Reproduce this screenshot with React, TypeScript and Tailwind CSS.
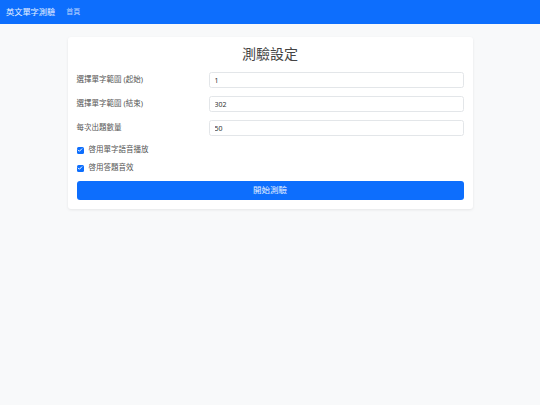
import { useState } from 'react';

const font = 'font-["Noto_Sans","Noto_Sans_CJK_TC",sans-serif]';

function Check({ label, checked, onChange }: { label: string; checked: boolean; onChange: () => void }) {
  return (
    <label className="flex h-[18px] items-center gap-[5px] cursor-pointer">
      <span
        onClick={onChange}
        className={
          checked
            ? 'grid h-[7px] w-[7px] place-items-center rounded-[1.5px] bg-[#0d6efd]'
            : 'grid h-[7px] w-[7px] place-items-center rounded-[1.5px] border border-[#adb5bd] bg-white'
        }
      >
        {checked && (
          <svg viewBox="0 0 8 8" className="h-[6px] w-[6px]">
            <path d="M1.6 4.1 3.2 5.7 6.4 2.4" fill="none" stroke="white" strokeWidth="1.3" strokeLinecap="round" strokeLinejoin="round" />
          </svg>
        )}
      </span>
      <span className="text-[7.5px] leading-none text-[#555]">{label}</span>
    </label>
  );
}

export default function App() {
  const [start, setStart] = useState('1');
  const [end, setEnd] = useState('302');
  const [count, setCount] = useState('50');
  const [speak, setSpeak] = useState(true);
  const [sfx, setSfx] = useState(true);

  const fields = [
    { label: '選擇單字範圍 (起始)', value: start, set: setStart },
    { label: '選擇單字範圍 (結束)', value: end, set: setEnd },
    { label: '每次出題數量', value: count, set: setCount },
  ];

  return (
    <div className={`${font} min-h-[405px] bg-[#f8f9fa]`}>
      <nav className="flex h-[24px] items-center gap-[11px] bg-[#0d6efd] px-[6px]">
        <span className="text-[8.2px] text-white/90">英文單字測驗</span>
        <span className="text-[7px] text-white/70">首頁</span>
      </nav>

      <div className="flex justify-center pt-[13px]">
        <div className="flex w-[405px] flex-col rounded-[3px] bg-white px-[9px] pt-[7px] pb-[9px] shadow-[0_1px_3px_rgba(0,0,0,0.08)]">
          <h1 className="mb-[8px] text-center text-[14px] leading-[20px] text-[#444]">測驗設定</h1>

          <div className="flex flex-col gap-[8px]">
            {fields.map((f) => (
              <div key={f.label} className="flex items-center">
                <span className="w-[132px] text-[7.5px] text-[#555]">{f.label}</span>
                <input
                  value={f.value}
                  onChange={(e) => f.set(e.target.value)}
                  className="h-[16px] flex-1 rounded-[2.5px] border border-[#e3e6e9] bg-white px-[5px] text-[7px] text-[#333] outline-none"
                />
              </div>
            ))}
          </div>

          <div className="mt-[5px] flex flex-col">
            <Check label="啓用單字語音播放" checked={speak} onChange={() => setSpeak((v) => !v)} />
            <Check label="啓用答題音效" checked={sfx} onChange={() => setSfx((v) => !v)} />
          </div>

          <button className="mt-[4px] block h-[19px] w-full rounded-[3px] bg-[#0d6efd] text-[8.5px] text-white/90">開始測驗</button>
        </div>
      </div>
    </div>
  );
}
